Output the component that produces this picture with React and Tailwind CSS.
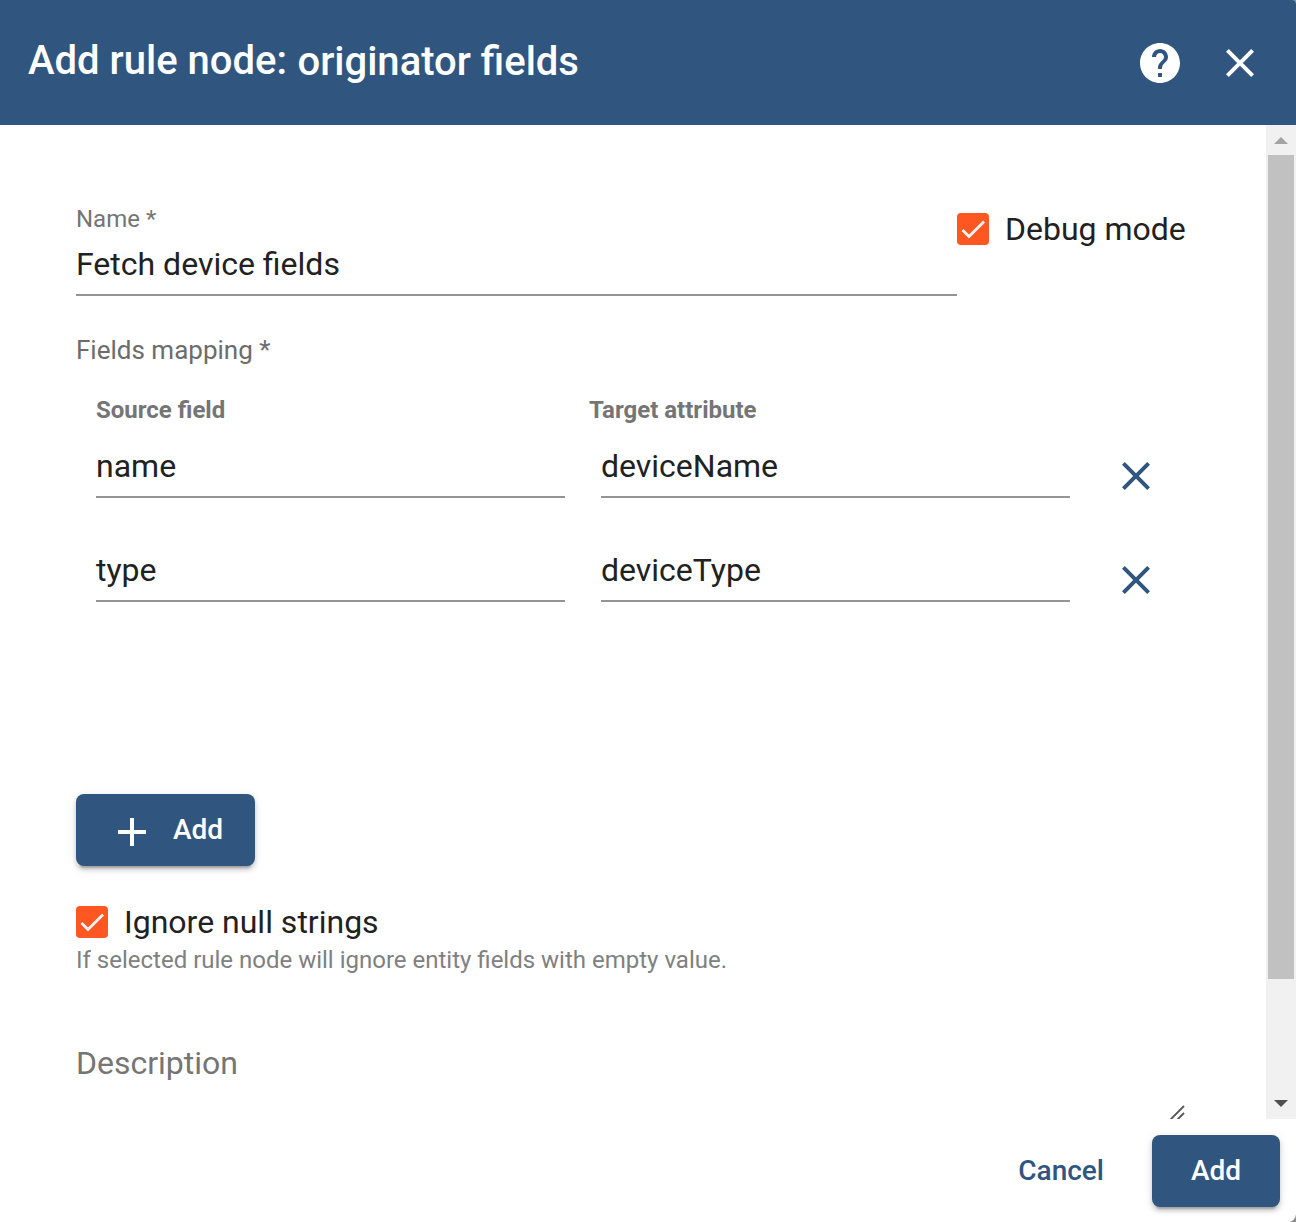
import React from 'react';

const CloseIcon = ({ className }) => (
  <svg viewBox="0 0 24 24" className={className} fill="currentColor">
    <path d="M19 6.41L17.59 5 12 10.59 6.41 5 5 6.41 10.59 12 5 17.59 6.41 19 12 13.41 17.59 19 19 17.59 13.41 12z" />
  </svg>
);

const HelpIcon = () => (
  <svg viewBox="0 0 24 24" className="h-12 w-12" fill="currentColor">
    <path d="M12 2C6.48 2 2 6.48 2 12s4.48 10 10 10 10-4.48 10-10S17.52 2 12 2zm1 17h-2v-2h2v2zm2.07-7.75l-.9.92C13.45 12.9 13 13.5 13 15h-2v-.5c0-1.1.45-2.1 1.17-2.83l1.24-1.26c.37-.36.59-.86.59-1.41 0-1.1-.9-2-2-2s-2 .9-2 2H8c0-2.21 1.79-4 4-4s4 1.79 4 4c0 .88-.36 1.68-.93 2.25z" />
  </svg>
);

const Checkbox = ({ label }) => (
  <label className="flex h-8 items-center">
    <span className="flex h-8 w-8 shrink-0 items-center justify-center rounded bg-[#ff5722]">
      <svg viewBox="0 0 24 24" className="h-8 w-8" fill="none" stroke="#f2f2f2" strokeWidth="2.1">
        <path d="M4.1 12.7 9 17.6 20.3 6.3" />
      </svg>
    </span>
    <span className="ml-4 text-[32px] leading-8 whitespace-nowrap text-[#212121]">{label}</span>
  </label>
);

const Field = ({ value, className = '' }) => (
  <div className={`h-[62px] border-b-2 border-[#949494] text-[32px] leading-[60px] text-[#212121] ${className}`}>{value}</div>
);

const rows = [
  ['name', 'deviceName'],
  ['type', 'deviceType'],
];

export default function App() {
  return (
    <div className="h-[1222px] w-[1296px] bg-[#8c8c8c]">
      <div className="flex h-full w-full flex-col overflow-hidden rounded-tr-[4px] rounded-br-[8px] bg-white font-['Roboto',sans-serif]">
        <header className="flex h-[125px] shrink-0 items-center bg-[#305680] pr-8 pl-7 text-white">
          <h1 className="mb-[3px] flex flex-1 gap-[10.5px] text-[40px] leading-[48px] font-medium">
            <span>Add rule node:</span>
            <span className="pt-px">originator fields</span>
          </h1>
          <HelpIcon />
          <CloseIcon className="ml-8 h-12 w-12" />
        </header>

        <div className="flex h-[994px] shrink-0">
          <main className="flex flex-1 flex-col overflow-hidden pt-[82px] pl-[76px]">
            <div className="flex">
              <div className="w-[881px]">
                <div className="h-6 text-[24px] leading-6 text-[#757575]">Name *</div>
                <Field value="Fetch device fields" className="mt-[3px]" />
              </div>
              <div className="pt-1.5">
                <Checkbox label="Debug mode" />
              </div>
            </div>

            <div className="mt-[38px] h-8 text-[26px] leading-8 text-[#6c6c6c]">Fields mapping *</div>
            <div className="mt-8 flex h-6 pl-5 text-[24px] leading-6 font-bold text-[#757575]">
              <div className="w-[493px]">Source field</div>
              <div>Target attribute</div>
            </div>
            <div className="mt-[14px] flex flex-col gap-[42px] pl-5">
              {rows.map(([source, target]) => (
                <div key={source} className="flex h-[62px] items-start">
                  <Field value={source} className="w-[469px]" />
                  <Field value={target} className="ml-9 w-[469px]" />
                  <CloseIcon className="mt-4 ml-[42px] h-12 w-12 text-[#305680]" />
                </div>
              ))}
            </div>

            <button className="mt-[192px] flex h-[72px] w-[179px] shrink-0 items-center rounded-lg bg-[#305680] pl-8 text-[28px] font-medium text-white shadow-[0_6px_2px_-4px_rgba(0,0,0,0.2),0_4px_4px_rgba(0,0,0,0.14),0_2px_10px_rgba(0,0,0,0.12)]">
              <svg viewBox="0 0 24 24" className="mt-1 h-12 w-12" fill="currentColor">
                <path d="M19 13h-6v6h-2v-6H5v-2h6V5h2v6h6v2z" />
              </svg>
              <span className="ml-[17px]">Add</span>
            </button>

            <div className="mt-10">
              <Checkbox label="Ignore null strings" />
            </div>
            <div className="mt-2.5 h-6 text-[24px] leading-6 text-[#808080]">
              If selected rule node will ignore entity fields with empty value.
            </div>
            <div className="mt-[71px] flex h-[76px] w-[1110px] shrink-0 justify-between">
              <div className="h-10 text-[32px] leading-10 text-[#757575]">Description</div>
              <svg viewBox="0 0 16 14" className="h-[14px] w-4 self-end" stroke="#555" strokeWidth="1.8" fill="none">
                <path d="M.5 14.5 14 1M7.5 14.5 14 8" />
              </svg>
            </div>
          </main>
          <div className="flex w-[30px] flex-col items-center bg-[#f1f1f1]">
            <div className="flex h-[30px] w-full justify-center pt-3">
              <svg viewBox="0 0 14 7" className="h-[7px] w-[14px]" fill="#a3a3a3"><path d="M0 7 7 0l7 7z" /></svg>
            </div>
            <div className="h-[824px] w-[26px] bg-[#c1c1c1]" />
            <div className="mt-auto flex h-[30px] w-full justify-center pt-[11px]">
              <svg viewBox="0 0 14 7" className="h-[7px] w-[14px]" fill="#505050"><path d="M0 0h14L7 7z" /></svg>
            </div>
          </div>
        </div>

        <footer className="flex flex-1 items-start justify-end pt-4 pr-4 text-[28px] font-medium">
          <button className="mr-12 h-[72px] text-[#305680]">Cancel</button>
          <button className="h-[72px] w-32 rounded-lg bg-[#305680] text-white shadow-[0_6px_2px_-4px_rgba(0,0,0,0.2),0_4px_4px_rgba(0,0,0,0.14),0_2px_10px_rgba(0,0,0,0.12)]">Add</button>
        </footer>
      </div>
    </div>
  );
}
